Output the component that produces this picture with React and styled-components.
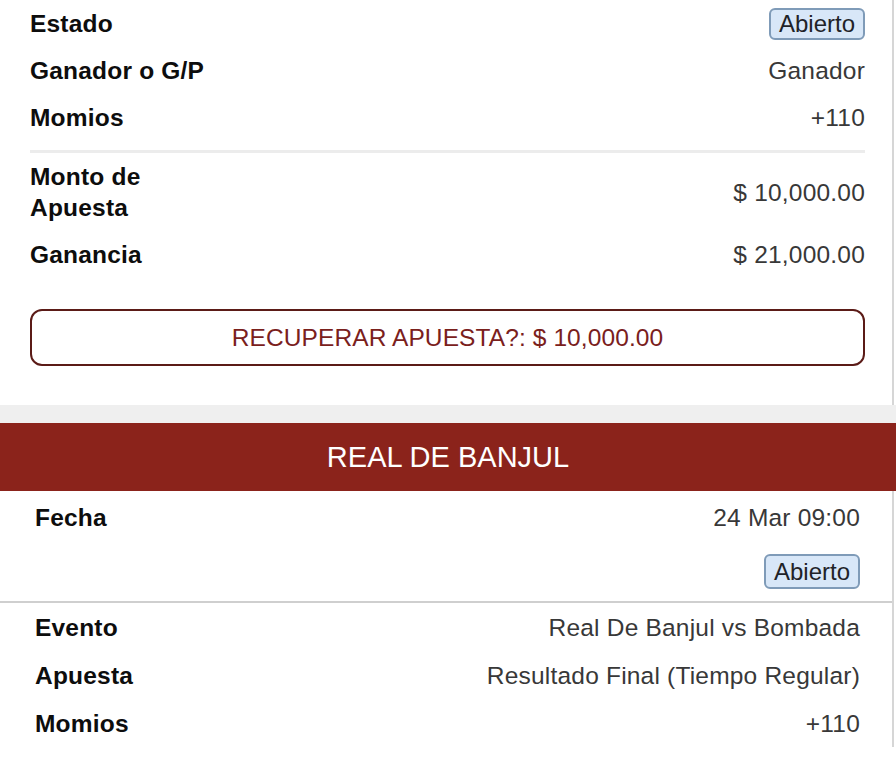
import React from 'react';
import styled, { createGlobalStyle } from 'styled-components';

const GlobalStyle = createGlobalStyle`
    body {
        margin: 0;
        background: #ffffff;
        font-family: 'Liberation Sans', Arial, sans-serif;
    }
`;

const PAGE = styled.div`
    width: 896px;
    background: #ffffff;
`;

const CARD = styled.div`
    margin-right: 2px;
    border-right: 2px solid #d6d6d6;
    background: #ffffff;
    padding: ${props => props.bottom ? '3px 32px 0 35px' : '0 27px 39px 30px'};
`;

const ROW = styled.div`
    display: flex;
    justify-content: space-between;
    align-items: center;
    min-height: ${props => props.tall ? '48px' : '47px'};
`;

const WRAPROW = styled(ROW)`
    padding: 8px 0;
`;

const LABEL = styled.div`
    font-size: 24.5px;
    font-weight: bold;
    color: #0d0d0d;
    line-height: 31px;
    letter-spacing: 0.2px;
`;

const VALUE = styled.div`
    font-size: 24.5px;
    color: #383838;
    line-height: 31px;
    letter-spacing: 0.2px;
    text-align: right;
`;

const BADGE = styled.span`
    display: inline-flex;
    align-items: center;
    justify-content: center;
    box-sizing: border-box;
    height: ${props => props.big ? '35px' : '32px'};
    padding: 0 8px;
    font-size: 24px;
    color: #1f2328;
    background: #d8e7f8;
    border: 2px solid #7f9bb8;
    border-radius: 6px;
`;

const DIVIDER = styled.div`
    height: 3px;
    background: #ececec;
    margin-top: 9px;
`;

const BADGEROW = styled.div`
    display: flex;
    justify-content: flex-end;
    padding: 13px 0 12px;
`;

const LINE = styled.div`
    height: 2px;
    background: #cfcfcf;
    margin: 0 -32px 0 -35px;
`;

const BUTTON = styled.button`
    display: block;
    width: 100%;
    height: 57px;
    margin-top: 31px;
    background: #ffffff;
    border: 2px solid #5b1b17;
    border-radius: 12px;
    color: #7a201c;
    font-family: 'Liberation Sans', Arial, sans-serif;
    font-size: 24.5px;
    letter-spacing: 0.1px;
    cursor: pointer;
`;

const STRIP = styled.div`
    height: 18px;
    background: #efefef;
`;

const HEADER = styled.div`
    height: 68px;
    display: flex;
    align-items: center;
    justify-content: center;
    background: #8b231b;
    color: #ffffff;
    font-size: 29px;
`;

const App = () => {
    return (
        <PAGE>
            <GlobalStyle />
            <CARD>
                <ROW>
                    <LABEL>Estado</LABEL>
                    <BADGE>Abierto</BADGE>
                </ROW>
                <ROW>
                    <LABEL>Ganador o G/P</LABEL>
                    <VALUE>Ganador</VALUE>
                </ROW>
                <ROW>
                    <LABEL>Momios</LABEL>
                    <VALUE>+110</VALUE>
                </ROW>
                <DIVIDER />
                <WRAPROW>
                    <LABEL>Monto de<br />Apuesta</LABEL>
                    <VALUE>$ 10,000.00</VALUE>
                </WRAPROW>
                <ROW>
                    <LABEL>Ganancia</LABEL>
                    <VALUE>$ 21,000.00</VALUE>
                </ROW>
                <BUTTON>RECUPERAR APUESTA?: $ 10,000.00</BUTTON>
            </CARD>
            <STRIP />
            <HEADER>REAL DE BANJUL</HEADER>
            <CARD bottom>
                <ROW>
                    <LABEL>Fecha</LABEL>
                    <VALUE>24 Mar 09:00</VALUE>
                </ROW>
                <BADGEROW>
                    <BADGE big>Abierto</BADGE>
                </BADGEROW>
                <LINE />
                <ROW tall>
                    <LABEL>Evento</LABEL>
                    <VALUE>Real De Banjul vs Bombada</VALUE>
                </ROW>
                <ROW tall>
                    <LABEL>Apuesta</LABEL>
                    <VALUE>Resultado Final (Tiempo Regular)</VALUE>
                </ROW>
                <ROW tall>
                    <LABEL>Momios</LABEL>
                    <VALUE>+110</VALUE>
                </ROW>
            </CARD>
        </PAGE>
    );
};

export default App;
